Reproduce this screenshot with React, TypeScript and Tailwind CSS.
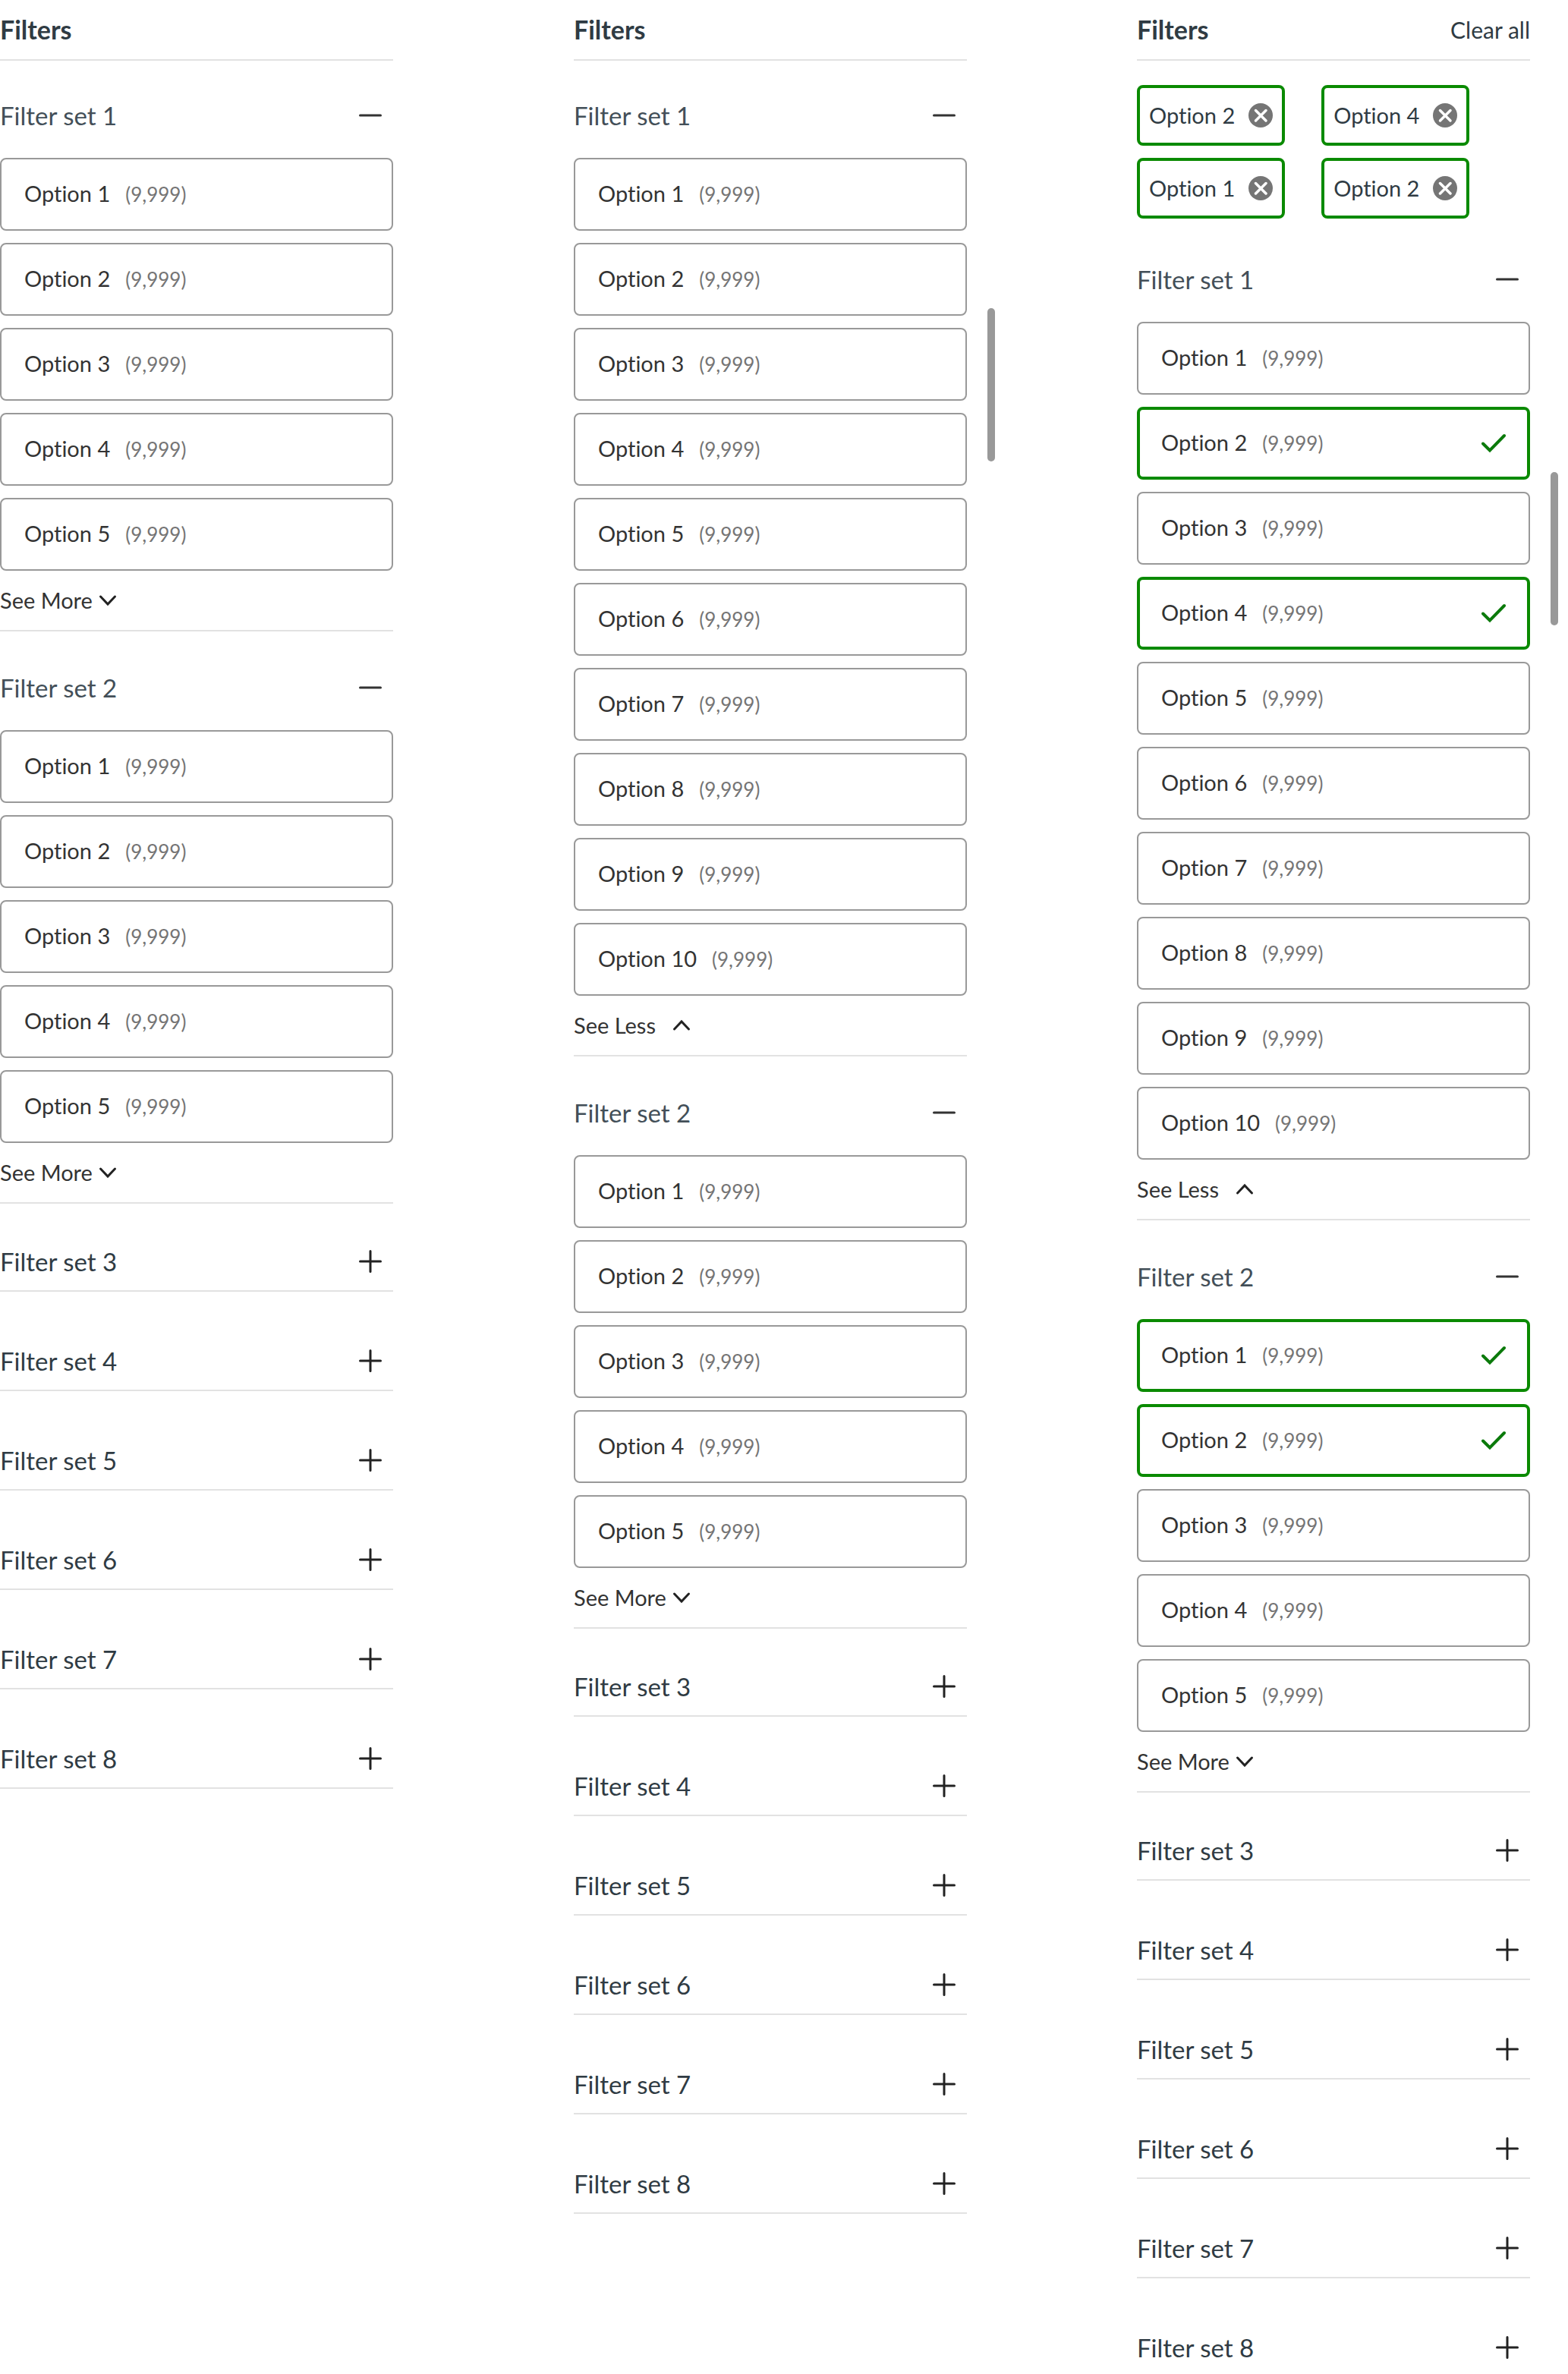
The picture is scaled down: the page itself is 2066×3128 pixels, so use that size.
import React, { useState } from 'react';

interface PanelProps {
  id: string;
  expandedSets?: string[];
  initialSelected?: string[];
  thumbClass?: string;
}

const SETS = Array.from({ length: 8 }, (_, i) => `Filter set ${i + 1}`);
const OPTIONS = Array.from({ length: 10 }, (_, i) => `Option ${i + 1}`);

const PlusIcon = () => (
  <svg width="30" height="30" viewBox="0 0 30 30" fill="none" stroke="#222" strokeWidth="3" strokeLinecap="round">
    <path d="M1.5 15h27M15 1.5v27" />
  </svg>
);

const MinusIcon = () => (
  <svg width="30" height="30" viewBox="0 0 30 30" fill="none" stroke="#333" strokeWidth="3" strokeLinecap="round">
    <path d="M1.5 15h27" />
  </svg>
);

const ChevronIcon = ({ up }: { up: boolean }) => (
  <svg width="24" height="28" viewBox="0 0 24 28" fill="none" stroke="#222" strokeWidth="3" strokeLinecap="round">
    <path d={up ? 'M2.5 19L12 9l9.5 10' : 'M2.5 9L12 19l9.5-10'} />
  </svg>
);

const CheckIcon = () => (
  <svg width="32" height="32" viewBox="0 0 32 32" fill="none" stroke="#0b7a0b" strokeWidth="4" strokeLinecap="round">
    <path d="M2 16.5l9 9L30 6" />
  </svg>
);

const RemoveIcon = () => (
  <svg width="32" height="32" viewBox="0 0 32 32" fill="none">
    <circle cx="16" cy="16" r="16" fill="#757575" />
    <path d="M9.5 9.5l13.5 13.5M23 9.5L9.5 23" stroke="#fff" strokeWidth="3.5" strokeLinecap="round" />
  </svg>
);

const FilterPanel: React.FC<PanelProps> = ({ id, expandedSets = [], initialSelected = [], thumbClass }) => {
  const [selected, setSelected] = useState(initialSelected);
  const [open, setOpen] = useState(['Filter set 1', 'Filter set 2']);
  const [expanded, setExpanded] = useState(expandedSets);

  const toggle = (list: string[], value: string) =>
    list.includes(value) ? list.filter(v => v !== value) : [...list, value];

  return (
    <section className="relative flex-1 min-w-0">
      <header className="flex h-20 items-center justify-between border-b-2 border-[#e2e2e2] text-[#2f3b43]">
        <h2 className="text-[34px] leading-[48px] font-bold">Filters</h2>
        {selected.length > 0 && (
          <button type="button" onClick={() => setSelected([])} className="text-[30px] leading-[48px]">
            Clear all
          </button>
        )}
      </header>

      {selected.length > 0 && (
        <ul className="flex flex-wrap gap-x-12 gap-y-4 pt-8 pb-2">
          {selected.map(key => (
            <li
              key={key}
              className="flex h-20 items-center gap-[18px] rounded-lg border-4 border-[#0a8a00] px-3 text-[29px] text-[#2f3b43]"
            >
              {key.split('/')[1]}
              <button
                type="button"
                aria-label={`Remove ${key.replace('/', ' ')}`}
                onClick={() => setSelected(toggle(selected, key))}
              >
                <RemoveIcon />
              </button>
            </li>
          ))}
        </ul>
      )}

      {SETS.map((set, index) => {
        const isOpen = open.includes(set);
        const isExpanded = expanded.includes(set);
        const afterOpen = index > 0 && open.includes(SETS[index - 1]);
        const openSpace = index > 0 ? 'pt-[50px]' : 'pt-12';
        const topSpace = isOpen ? openSpace : afterOpen ? 'pt-[52px]' : 'pt-[67px]';

        return (
          <div key={set} className={`border-b-2 border-[#e2e2e2] ${topSpace}`}>
            <button
              type="button"
              aria-expanded={isOpen}
              onClick={() => setOpen(toggle(open, set))}
              className={`flex h-12 w-full items-center justify-between pr-[15px] text-[33px] leading-[48px] ${
                isOpen ? 'text-[#434f58] mb-8' : 'text-[#2f3b43] mb-3.5'
              }`}
            >
              {set}
              {isOpen ? <MinusIcon /> : <PlusIcon />}
            </button>

            {isOpen && (
              <>
                <div className="flex flex-col gap-4">
                  {OPTIONS.slice(0, isExpanded ? 10 : 5).map(option => {
                    const key = `${set}/${option}`;
                    const isSelected = selected.includes(key);
                    return (
                      <label
                        key={option}
                        htmlFor={`${id}/${key}`}
                        className={`relative flex h-24 cursor-pointer items-center justify-between rounded-lg ${
                          isSelected ? 'border-4 border-[#0a8a00] px-7' : 'border-2 border-[#999] px-[30px]'
                        }`}
                      >
                        <input
                          id={`${id}/${key}`}
                          type="checkbox"
                          checked={isSelected}
                          onChange={() => setSelected(toggle(selected, key))}
                          className="sr-only"
                        />
                        <span className="flex items-baseline gap-5 pb-0.5 text-[29px] text-[#333]">
                          {option}
                          <span className="text-[26px] text-[#757575]">(9,999)</span>
                        </span>
                        {isSelected && <CheckIcon />}
                      </label>
                    );
                  })}
                </div>
                <button
                  type="button"
                  onClick={() => setExpanded(toggle(expanded, set))}
                  className={`flex h-[78px] items-center text-[29px] text-[#333] ${isExpanded ? 'gap-[22px]' : 'gap-2'}`}
                >
                  {isExpanded ? 'See Less' : 'See More'}
                  <ChevronIcon up={isExpanded} />
                </button>
              </>
            )}
          </div>
        );
      })}

      {/* Scroll thumb beside the panel */}
      {thumbClass && <div className={`absolute left-full ml-[27px] h-[202px] w-2.5 rounded-full bg-[#999] ${thumbClass}`} />}
    </section>
  );
};

export default function App() {
  return (
    <main className="flex h-screen overflow-hidden bg-white pr-[50px] font-['Lato','Noto_Sans',sans-serif] [font-variant-ligatures:none]">
      <FilterPanel id="default" />
      <div className="w-[238px] shrink" />
      <FilterPanel id="expanded" expandedSets={['Filter set 1']} thumbClass="top-[406px]" />
      <div className="w-56 shrink" />
      <FilterPanel
        id="selected"
        expandedSets={['Filter set 1']}
        initialSelected={[
          'Filter set 1/Option 2',
          'Filter set 1/Option 4',
          'Filter set 2/Option 1',
          'Filter set 2/Option 2',
        ]}
        thumbClass="top-[622px]"
      />
    </main>
  );
}
